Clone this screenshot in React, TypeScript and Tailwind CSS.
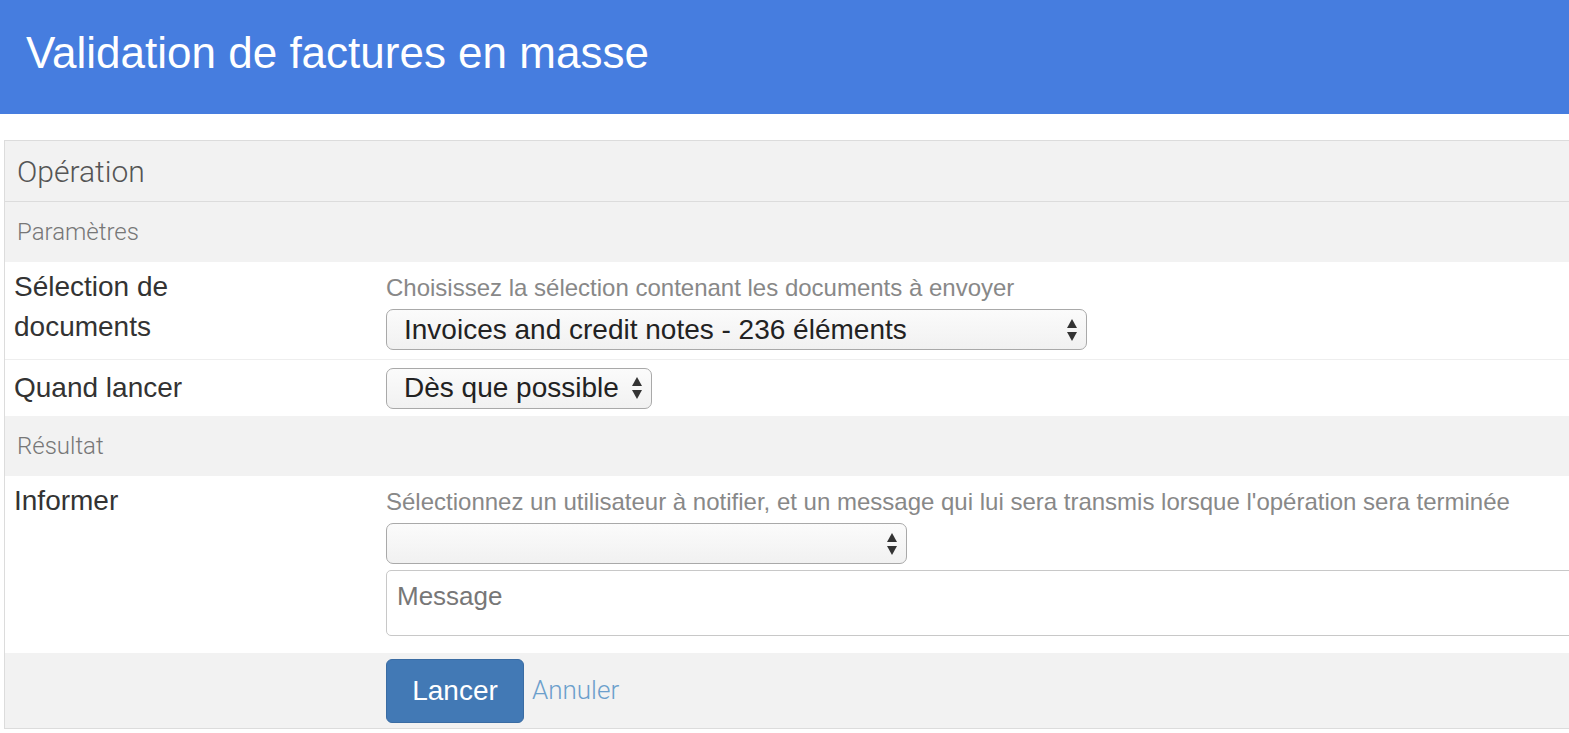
import React from "react";

const Arrows = () => (
  <svg width="12" height="26" viewBox="0 0 12 26" className="shrink-0">
    <path d="M6 2 L11 11 L1 11 Z" fill="#333" />
    <path d="M6 24 L11 15 L1 15 Z" fill="#333" />
  </svg>
);

const Select = ({ text, w }: { text: string; w: string }) => (
  <div
    className={`${w} h-[41px] flex items-center justify-between pl-[17px] pr-[8px] rounded-[7px] border border-[#a9a9a9] bg-gradient-to-b from-[#fbfbfb] to-[#f1f1f1] text-[28px] text-[#222]`}
  >
    <span className="whitespace-nowrap">{text}</span>
    <Arrows />
  </div>
);

export default function App() {
  return (
    <div
      className="w-[1569px] h-[733px] overflow-hidden bg-white"
      style={{ fontFamily: '"Liberation Sans", Arial, sans-serif' }}
    >
      <div className="h-[114px] bg-[#467ddf] flex items-center pl-[26px] pb-[8px]">
        <h1 className="text-white text-[44px] leading-none">
          Validation de factures en masse
        </h1>
      </div>
      <div className="mt-[26px] ml-[4px] w-[1640px] border border-[#dcdcdc] bg-[#f2f2f2]">
        <div
          className="h-[61px] flex items-center pl-[12px] border-b border-[#dcdcdc] text-[30px] text-[#555] font-light"
          style={{ fontFamily: 'Roboto, "Liberation Sans", sans-serif' }}
        >
          Opération
        </div>
        <div
          className="h-[60px] flex items-center pl-[12px] text-[24px] text-[#777] font-light"
          style={{ fontFamily: 'Roboto, "Liberation Sans", sans-serif' }}
        >
          Paramètres
        </div>
        <div className="bg-white flex h-[98px] border-b border-[#eeeeee]">
          <div className="w-[381px] pl-[9px] pt-[5px] text-[28px] leading-[40px] text-[#333]">
            Sélection de
            <br />
            documents
          </div>
          <div className="flex-1 pt-[13px]">
            <div className="text-[24px] leading-[26px] text-[#888] mb-[8px] whitespace-nowrap">
              Choisissez la sélection contenant les documents à envoyer
            </div>
            <Select text="Invoices and credit notes - 236 éléments" w="w-[701px]" />
          </div>
        </div>
        <div className="bg-white flex h-[56px] items-center">
          <div className="w-[381px] pl-[9px] text-[28px] text-[#333]">Quand lancer</div>
          <div className="flex-1">
            <Select text="Dès que possible" w="w-[266px]" />
          </div>
        </div>
        <div
          className="h-[60px] flex items-center pl-[12px] text-[24px] text-[#777] font-light"
          style={{ fontFamily: 'Roboto, "Liberation Sans", sans-serif' }}
        >
          Résultat
        </div>
        <div className="bg-white flex h-[177px]">
          <div className="w-[381px] pl-[9px] pt-[5px] text-[28px] leading-[40px] text-[#333]">
            Informer
          </div>
          <div className="flex-1 pt-[13px]">
            <div className="text-[24px] leading-[26px] text-[#888] mb-[8px] whitespace-nowrap">
              Sélectionnez un utilisateur à notifier, et un message qui lui sera transmis lorsque l'opération sera terminée
            </div>
            <Select text="" w="w-[521px]" />
            <div className="mt-[6px] h-[66px] rounded-[5px] border border-[#c8c8c8] bg-white pl-[10px] pt-[10px] text-[26px] leading-[30px] text-[#777]">
              Message
            </div>
          </div>
        </div>
        <div className="h-[75px] flex items-center">
          <div className="w-[381px]" />
          <button className="h-[64px] w-[138px] rounded-[6px] bg-[#4279b5] border border-[#3a6ca3] text-white text-[28px]">
            Lancer
          </button>
          <span
            className="ml-[8px] text-[26px] text-[#6c9fcc] font-light"
            style={{ fontFamily: 'Roboto, "Liberation Sans", sans-serif' }}
          >
            Annuler
          </span>
        </div>
      </div>
    </div>
  );
}
